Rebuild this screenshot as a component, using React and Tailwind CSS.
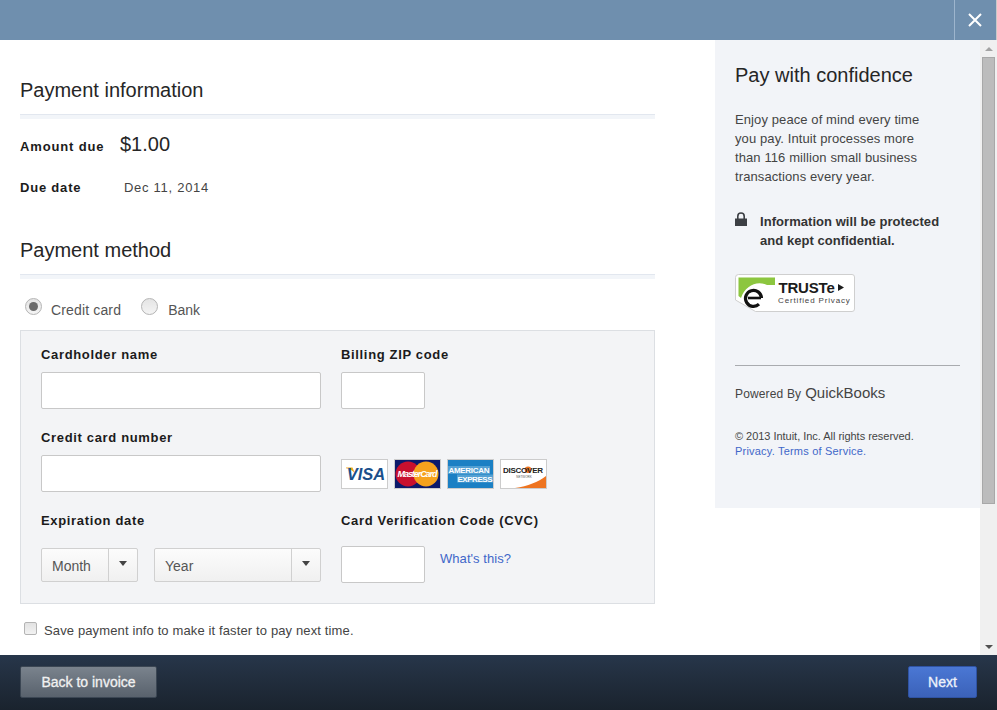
const Rule = () => <div className="h-[5px] border-t border-[#e2e7ef] bg-[#f2f5f9]" />;

const Label = ({ children }) => (
  <div className="pt-[1px] text-[13px] leading-[16px] font-bold tracking-[0.66px] text-[#1b1b1b]">{children}</div>
);

const TextInput = ({ className }) => (
  <div className={`h-[37px] rounded-[2px] border border-[#c8c8c8] bg-white ${className}`} />
);

const Select = ({ label, className }) => (
  <div className={`flex h-[34px] items-stretch rounded-[2px] border border-[#d0d0d0] bg-gradient-to-b from-[#fcfcfc] to-[#f0f0f0] text-[14px] text-[#555] ${className}`}>
    <div className="flex flex-1 items-center pl-[10px] pt-[2px]">{label}</div>
    <div className="flex w-[29px] items-center justify-center border-l border-[#d0d0d0]">
      <div className="mb-[3px] h-0 w-0 border-x-[4.5px] border-t-[5px] border-x-transparent border-t-[#444]" />
    </div>
  </div>
);

const CardBox = ({ children }) => (
  <svg width="47" height="30" viewBox="0 0 47 30" className="block">
    {children}
  </svg>
);

const Visa = () => (
  <CardBox>
    <rect x="0.5" y="0.5" width="46" height="29" fill="#fff" stroke="#ccc" />
    <path d="M5 8.500h6.500l2.500 6C12 11.500 8.500 9.800 5 9.300z" fill="#f0a81c" />
    <text x="25" y="21" textAnchor="middle" fontFamily="Liberation Sans" fontWeight="700" fontStyle="italic" fontSize="16.500" fill="#1a4f8b">VISA</text>
  </CardBox>
);

const MasterCard = () => (
  <CardBox>
    <rect x="0.5" y="0.5" width="46" height="29" fill="#0c1a6b" stroke="#ccc" />
    <circle cx="14" cy="15" r="12.500" fill="#c8102e" />
    <circle cx="32" cy="15" r="12.500" fill="#f6a21d" />
    <text x="3.500" y="18" fontFamily="Liberation Sans" fontWeight="700" fontStyle="italic" fontSize="9" textLength="40" fill="#fff">MasterCard</text>
  </CardBox>
);

const Amex = () => (
  <CardBox>
    <rect x="0.5" y="0.5" width="46" height="29" fill="#1b80c4" stroke="#ccc" />
    <rect x="1" y="7" width="42" height="8" fill="#d8ebf6" opacity="0.3" />
    <rect x="10" y="15.500" width="36" height="8" fill="#d8ebf6" opacity="0.3" />
    <text x="1.500" y="14" fontFamily="Liberation Sans" fontWeight="700" fontSize="8" textLength="41" fill="#fff">AMERICAN</text>
    <text x="10.500" y="22.500" fontFamily="Liberation Sans" fontWeight="700" fontSize="8" textLength="35" fill="#fff">EXPRESS</text>
  </CardBox>
);

const Discover = () => (
  <CardBox>
    <rect x="0.5" y="0.5" width="46" height="29" fill="#fff" stroke="#ccc" />
    <path d="M15 29C28 27 38 23 46 17V29z" fill="#ee7420" />
    <circle cx="28" cy="10.800" r="3.300" fill="#ee7420" />
    <text x="3" y="14" fontFamily="Liberation Sans" fontWeight="700" fontSize="8" textLength="40" fill="#222">DISCOVER</text>
    <text x="24" y="18.500" textAnchor="middle" fontFamily="Liberation Sans" fontSize="3" fill="#555">NETWORK</text>
  </CardBox>
);

const TrusteBadge = () => (
  <svg width="120" height="38" viewBox="0 0 120 38" className="block">
    <path d="M3.500 0.500H117a2.500 2.500 0 0 1 2.500 2.500v32a2.500 2.500 0 0 1-2.500 2.500H20.500L0.500 26V3.500a3 3 0 0 1 3-3z" fill="#fff" stroke="#cfcfcf" />
    <path d="M3.500 3.500H40V11H32C22 6 10 12 6 24L3.500 22z" fill="#8cc63f" />
    <path d="M26.500 24A8 8 0 1 0 24 30.200" fill="none" stroke="#111" strokeWidth="3.200" />
    <path d="M13 24H26" stroke="#111" strokeWidth="2.600" />
    <text x="43.500" y="19" fontFamily="Liberation Sans" fontWeight="700" fontSize="15" letterSpacing="-0.2" fill="#1c1c1c">TRUSTe</text>
    <path d="M103 10l6 3.500-6 3.500z" fill="#1c1c1c" />
    <text x="43" y="29" fontFamily="Liberation Sans" fontSize="8" letterSpacing="0.85" fill="#444">Certified Privacy</text>
  </svg>
);

const LockIcon = () => (
  <svg width="12" height="14" viewBox="0 0 12 14" className="block">
    <path d="M0 6.500h12V14H0z" fill="#3c3f44" />
    <path d="M2.800 7V4.200a3.200 3.200 0 0 1 6.400 0V7" fill="none" stroke="#3c3f44" strokeWidth="1.600" />
  </svg>
);

const Scrollbar = () => (
  <div className="flex w-[17px] flex-col items-center bg-[#f0f0f0]">
    <div className="flex h-[17px] items-center justify-center">
      <div className="h-0 w-0 border-x-[4px] border-b-[4px] border-x-transparent border-b-[#a3a3a3]" />
    </div>
    <div className="h-[447px] w-[13px] border border-[#a8a8a8] bg-[#bcbcbc]" />
    <div className="flex-1" />
    <div className="flex h-[17px] items-center justify-center">
      <div className="h-0 w-0 border-x-[4px] border-t-[4px] border-x-transparent border-t-[#505050]" />
    </div>
  </div>
);

export default function App() {
  return (
    <div className="flex h-[710px] w-[997px] flex-col overflow-hidden bg-white font-['Liberation_Sans',Arial,sans-serif] text-[#333]">
      {/* top bar */}
      <div className="flex h-[40px] justify-end bg-[#6f8fae]">
        <button className="flex w-[42px] items-center justify-center border-l border-[#9db5cd] pr-[1px]">
          <svg width="16" height="16" viewBox="0 0 16 16">
            <path d="M2 2l12 12M14 2L2 14" stroke="#fff" strokeWidth="2" />
          </svg>
        </button>
        <div className="w-px bg-[#c9c9c9]" />
      </div>

      <div className="flex min-h-0 flex-1">
        <div className="w-[715px] pl-[20px] pr-[60px]">
          <h2 className="mt-[38px] text-[20px] leading-[24px] text-[#262626]">Payment information</h2>
          <div className="mt-[12px]">
            <Rule />
          </div>

          <div className="mt-[13px] flex items-center">
            <div className="mt-[5px] w-[100px] text-[13px] leading-[16px] font-bold tracking-[0.85px] text-[#1b1b1b]">Amount due</div>
            <div className="text-[20px] leading-[24px] text-[#262626]">$1.00</div>
          </div>
          <div className="mt-[24px] flex items-center">
            <div className="w-[104px] text-[13px] leading-[16px] font-bold tracking-[0.8px] text-[#1b1b1b]">Due date</div>
            <div className="text-[13px] leading-[16px] tracking-[0.72px] text-[#444]">Dec 11, 2014</div>
          </div>

          <h2 className="mt-[42px] text-[20px] leading-[24px] text-[#262626]">Payment method</h2>
          <div className="mt-[12px]">
            <Rule />
          </div>

          <div className="mt-[19px] flex h-[20px] items-start pl-[5px] text-[14px] tracking-[0.15px] text-[#555]">
            <div className="flex h-[17px] w-[17px] items-center justify-center rounded-full border border-[#b4b4b4] bg-gradient-to-b from-[#e4e4e4] to-[#f4f4f4]">
              <div className="h-[9px] w-[9px] rounded-full bg-[#6b6b6b]" />
            </div>
            <span className="ml-[9px] mt-[4px] leading-[17px]">Credit card</span>
            <div className="ml-[20px] h-[17px] w-[17px] rounded-full border border-[#b4b4b4] bg-gradient-to-b from-[#e4e4e4] to-[#f4f4f4]" />
            <span className="ml-[10px] mt-[4px] leading-[17px] tracking-[0px]">Bank</span>
          </div>

          {/* card form */}
          <div className="mt-[12px] h-[274px] border border-[#dcdfe3] bg-[#f3f4f6] pl-[20px] pt-[15px]">
            <div className="grid grid-cols-[300px_1fr]">
              <div>
                <Label>Cardholder name</Label>
                <TextInput className="mt-[9px] w-[280px]" />
              </div>
              <div>
                <Label>Billing ZIP code</Label>
                <TextInput className="mt-[9px] w-[84px]" />
              </div>

              <div className="mt-[20px]">
                <Label>Credit card number</Label>
                <TextInput className="mt-[9px] w-[280px]" />
              </div>
              <div className="mt-[50px] flex gap-[6px]">
                <Visa />
                <MasterCard />
                <Amex />
                <Discover />
              </div>

              <div className="mt-[20px]">
                <Label>Expiration date</Label>
                <div className="mt-[19px] flex gap-[16px]">
                  <Select label="Month" className="w-[97px]" />
                  <Select label="Year" className="w-[167px]" />
                </div>
              </div>
              <div className="mt-[20px]">
                <Label>Card Verification Code (CVC)</Label>
                <div className="mt-[17px] flex">
                  <TextInput className="w-[84px]" />
                  <a className="ml-[15px] mt-[4px] text-[13px] leading-[17px] tracking-[0.05px] text-[#3f67c9]">What's this?</a>
                </div>
              </div>
            </div>
          </div>

          <div className="ml-[4px] mt-[19px] flex items-center">
            <div className="-mt-[6px] h-[13px] w-[13px] rounded-[2px] border border-[#b4b4b4] bg-gradient-to-b from-[#e2e2e2] to-[#f2f2f2]" />
            <span className="ml-[7px] text-[13px] leading-[16px] tracking-[0.13px] text-[#444]">Save payment info to make it faster to pay next time.</span>
          </div>
        </div>

        {/* side panel */}
        <div className="h-[468px] w-[265px] bg-[#f2f4f8] pl-[20px] pr-[20px]">
          <h2 className="mt-[23px] text-[20px] leading-[24px] text-[#262626]">Pay with confidence</h2>
          <p className="mt-[23px] text-[13px] leading-[19px] tracking-[0.1px] text-[#444]">
            Enjoy peace of mind every time<br />
            you pay. Intuit processes more<br />
            than 116 million small business<br />
            transactions every year.
          </p>
          <div className="mt-[26px] flex">
            <div className="w-[25px]"><LockIcon /></div>
            <div className="text-[13px] leading-[19px] font-bold tracking-[0.05px] text-[#333]">
              Information will be protected<br />and kept confidential.
            </div>
          </div>
          <div className="mt-[24px]"><TrusteBadge /></div>
          <div className="mt-[53px] h-px bg-[#a9abaf]" />
          <div className="mt-[18px] flex items-baseline text-[12px] leading-[18px] tracking-[0.15px] text-[#444]">
            Powered By <span className="ml-[4px] text-[15px] tracking-[0px] text-[#444]">QuickBooks</span>
          </div>
          <div className="mt-[26px] text-[11px] leading-[15px] tracking-[-0.03px] text-[#444]">
            © 2013 Intuit, Inc. All rights reserved.<br />
            <span className="tracking-[0.2px] text-[#3f67c9]">Privacy. Terms of Service.</span>
          </div>
        </div>

        <Scrollbar />
      </div>

      {/* footer */}
      <div className="flex h-[55px] items-start justify-between bg-gradient-to-b from-[#27364a] to-[#1a232e] pl-[20px] pr-[20px] pt-[11px]">
        <button className="h-[32px] w-[137px] rounded-[2px] border border-[#3b4653] bg-gradient-to-b from-[#7a838d] to-[#59626d] text-[14px] text-[#f1f1f1] [-webkit-text-stroke:0.3px]">Back to invoice</button>
        <button className="h-[32px] w-[69px] rounded-[2px] border border-[#2f53a3] bg-gradient-to-b from-[#4a77d4] to-[#3b62b9] text-[14px] text-[#eef2fb] [-webkit-text-stroke:0.3px]">Next</button>
      </div>
    </div>
  );
}
